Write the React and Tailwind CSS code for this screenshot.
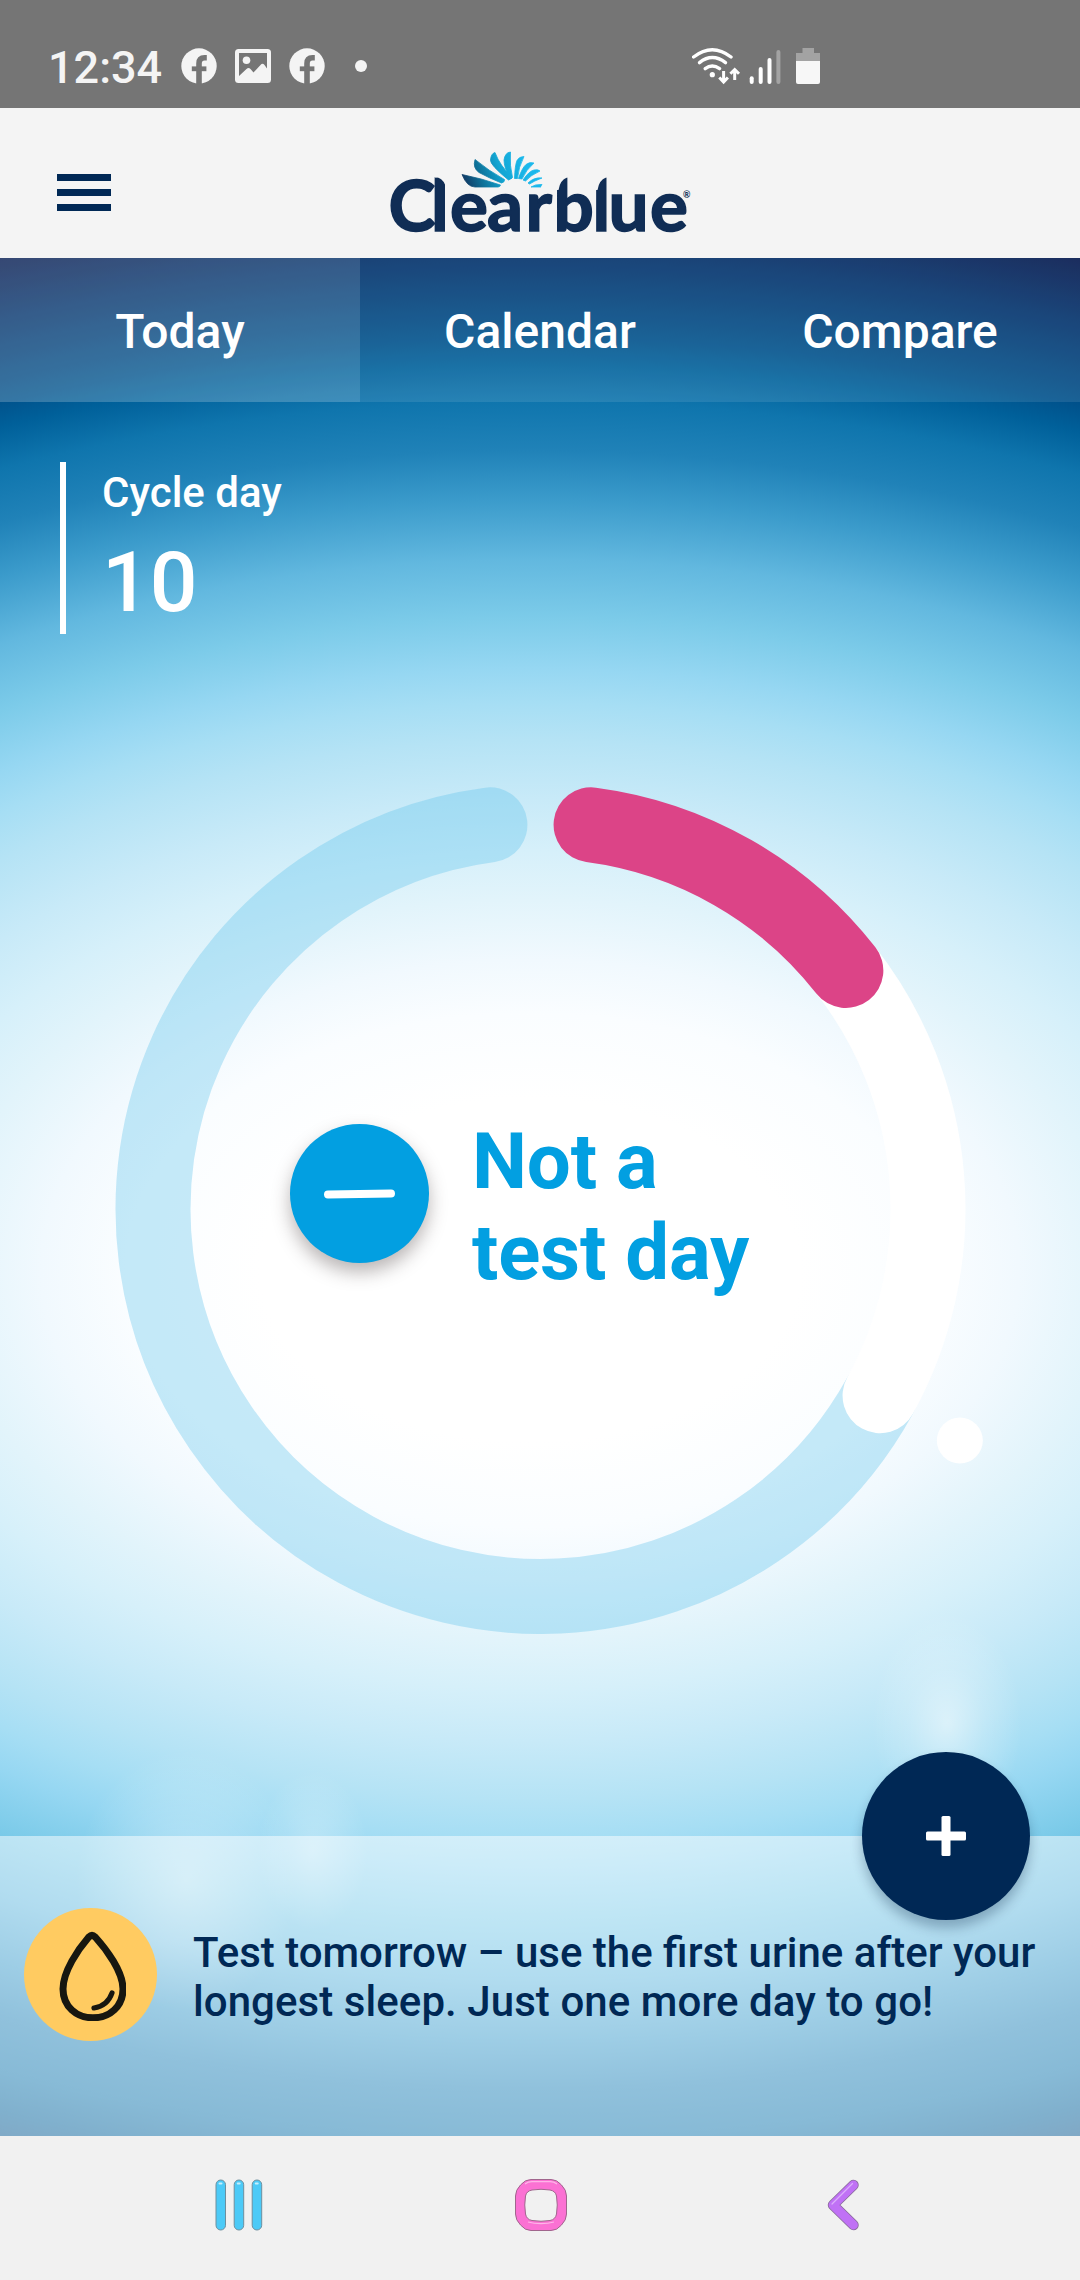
const TABS = [
  { id: 'today', label: 'Today' },
  { id: 'calendar', label: 'Calendar' },
  { id: 'compare', label: 'Compare' },
];

// ---------- RING GEOMETRY ----------
const RING = { cx: 540.5, cy: 1209, r: 387.5, width: 75 };

const polar = (deg, r = RING.r) => {
  const rad = ((deg - 90) * Math.PI) / 180;
  return [RING.cx + r * Math.cos(rad), RING.cy + r * Math.sin(rad)];
};

const arc = (from, to) => {
  const [x1, y1] = polar(from);
  const [x2, y2] = polar(to);
  const large = to - from > 180 ? 1 : 0;
  return `M${x1} ${y1}A${RING.r} ${RING.r} 0 ${large} 1 ${x2} ${y2}`;
};

function FacebookIcon() {
  return (
    <svg className="h-9 w-9" viewBox="0 0 36 36" fill="none">
      <circle cx="18" cy="18" r="17.7" fill="#f4f4f4" />
      <path d="M18 36V15.5Q18 9.8 23.5 9.8H25.8" stroke="#757575" strokeWidth="5.6" />
      <path d="M10.8 20.8H25.4" stroke="#757575" strokeWidth="4.8" />
    </svg>
  );
}

function PictureIcon() {
  return (
    <svg className="h-[34px] w-9" viewBox="0 0 36 34">
      <rect width="36" height="34" rx="3.5" fill="#f4f4f4" />
      <path d="M4 4H32V19.5L29.5 16Q27.5 13.5 25.5 16L18.5 23.5L15.5 20Q13.5 18 11.5 20L4 27Z" fill="#757575" />
      <circle cx="11.5" cy="11.3" r="3.8" fill="#f4f4f4" />
    </svg>
  );
}

function StatusBar() {
  return (
    <div className="flex h-[108px] items-start bg-[#757575] pl-12 text-[#f4f4f4]">
      <span className="mt-[42px] w-[133px] text-[45px] leading-[52px] font-medium">12:34</span>
      <div className="mt-12 flex items-center gap-[18px]">
        <FacebookIcon />
        <PictureIcon />
        <FacebookIcon />
      </div>
      <span className="mt-[60px] ml-[30px] h-3 w-3 rounded-full bg-[#f4f4f4]" />

      {/* wifi, signal, battery */}
      <svg className="mt-[46px] ml-[325px] h-10 w-[130px]" viewBox="692 46 130 40" fill="none" stroke="#fff" strokeLinecap="round">
        <g strokeWidth="3.4">
          <path d="M693.6 57Q712.2 42.5 731 57" />
          <path d="M699.5 62.6Q712.2 52.5 725.5 62.6" />
          <path d="M705.2 68.6Q712.2 63.3 719.6 68.6" />
        </g>
        <circle cx="712.3" cy="74.7" r="2.6" fill="#fff" stroke="none" />
        <g strokeWidth="3" strokeLinecap="butt">
          <path d="M723.6 71V82M719.3 77.5L723.6 82L727.9 77.5" />
          <path d="M734.7 80V69.5M730.4 73.8L734.7 69.5L739 73.8" />
        </g>
        <g strokeWidth="4">
          <path d="M751.7 78.2V82" />
          <path d="M760.7 69V82" />
          <path d="M769.5 60V82" />
          <path d="M778.4 52V82" stroke="#a3a3a3" />
        </g>
        <path d="M802.5 48H814V53H820V61H796V53H802.5Z" fill="#a3a3a3" stroke="none" />
        <path d="M796 61H820V82Q820 84 818 84H798Q796 84 796 82Z" fill="#f7f7f7" stroke="none" />
      </svg>
    </div>
  );
}

function Logo() {
  return (
    <svg className="h-[106px] w-[310px]" viewBox="385 148 310 106">
      <defs>
        <linearGradient id="rays" gradientUnits="userSpaceOnUse" x1="462" y1="186" x2="525" y2="164">
          <stop offset="0" stopColor="#12305b" />
          <stop offset="0.3" stopColor="#0d6f96" />
          <stop offset="0.62" stopColor="#12a5d2" />
          <stop offset="1" stopColor="#1ab8ec" />
        </linearGradient>
      </defs>
      <g fill="url(#rays)" stroke="url(#rays)" strokeWidth="0.8">
        <path d="M462 174.500Q482 178.500 500.500 185Q500 187 498 187H475Q467 187 462 174.500Z" />
        <path d="M475 159.500Q489 171 504.500 179.500Q505 182 501.500 183Q489 178 479 172.500Q472.500 168 475 159.500Z" />
        <path d="M495 152.500Q500 166 512 177Q511 179.500 508.500 180Q490 165 490.500 160Q491 153.500 495 152.500Z" />
        <path d="M510.500 152Q509.500 166 512.500 177.500Q511 180 509.500 178Q504 167 504 160Q505 152.500 510.500 152Z" />
        <path d="M524 156.500Q518.500 167 517.500 178.500H514.500Q515 165 517 160.500Q519 156.500 524 156.500Z" />
        <path d="M534 163Q526 170 522 179L518.500 178.500Q522 168 526 164.500Q529.500 161.500 534 163Z" />
        <path d="M540 171Q531 175 525.500 181L523 180Q529 171 534 170Q538 169 540 171Z" />
        <path d="M542 178Q534 181 529.500 184L528 183Q534 177 542 178Z" />
        <path d="M542 184.500Q540 187 541 187H531Q535 184 542 184.500Z" />
      </g>
      <text
        y="230.6"
        x="388.5 431 450 487 525.5 553.5 592.5 608.5 650"
        className="font-[Lato,sans-serif] text-[71px] font-bold"
        fill="#102d55"
        stroke="#102d55"
        strokeWidth="1.6"
      >
        Clearblue
      </text>
      {/* rounded cut on the ascenders */}
      <g fill="#f4f4f4">
        <path d="M435 174V177.500H438Q445 180 446.500 190H449V174Z" />
        <path d="M569.500 174V177.500H567Q560 180 558.500 190H556V174Z" />
        <path d="M608 174V177.500H606Q599 180 597.500 190H595V174Z" />
      </g>
      <text x="683" y="197.5" className="font-[Lato,sans-serif] text-[9px] font-bold" fill="#102d55">®</text>
    </svg>
  );
}

function CycleRing() {
  const [dotX, dotY] = polar(118.9, 479);

  return (
    <div className="mt-[150px] grid h-[850px]">
      <svg className="col-start-1 row-start-1 h-[850px] w-[1080px]" viewBox="0 784 1080 850" fill="none" strokeWidth={RING.width}>
        <path d={arc(118.8, 352.5)} stroke="#5bc2ea" strokeOpacity="0.34" strokeLinecap="round" />
        <path d={arc(52, 118.8)} stroke="#fff" strokeLinecap="round" />
        <path d={arc(7.5, 52)} stroke="#dc4487" strokeLinecap="round" />
        <circle cx={dotX} cy={dotY} r="23" fill="#fff" />
      </svg>

      <div className="col-start-1 row-start-1 flex items-start pt-[332px] pl-[289.5px]">
        <div className="mt-2 flex h-[139px] w-[139px] items-center justify-center rounded-full bg-[#029fe1] shadow-[0_9px_18px_rgba(60,50,50,0.36)]">
          <span className="h-[7.5px] w-[71px] -rotate-1 rounded-full bg-white" />
        </div>
        <p className="ml-[43.5px] text-[78px] leading-[91px] font-bold tracking-[-0.2px] text-[#029fe1]">
          Not a
          <br />
          test day
        </p>
      </div>
    </div>
  );
}

function TipPanel() {
  return (
    <div className="relative flex h-[300px] items-start bg-white/50 pl-6">
      <div className="mt-[72px] flex h-[133px] w-[133px] items-center justify-center rounded-full bg-[#ffcb61]">
        <svg className="h-[92px] w-[70px]" viewBox="55.5 1928.5 70 92" fill="none" stroke="#171710" strokeLinecap="round">
          <path d="M88.3 1936.5Q91.5 1933.5 94.7 1936.5C106 1949 122.5 1971 122.5 1988.5C122.5 2006 109 2017.3 92.5 2017.3C76 2017.3 62.5 2006 62.5 1988.5C62.5 1971 77.5 1949 88.3 1936.5Z" strokeWidth="7" />
          <path d="M111.5 1992.5Q107 2005.5 93.5 2007.5" strokeWidth="5.2" />
        </svg>
      </div>
      <p className="mt-[92px] ml-9 text-[42px] leading-[49px] font-medium whitespace-nowrap text-[#002855]">
        Test tomorrow – use the first urine after your
        <br />
        <span className="tracking-[0.07px]">longest sleep. Just one more day to go!</span>
      </p>

      {/* floating add button sits on the panel edge */}
      <button className="absolute -top-[84px] right-[50px] flex h-[168px] w-[168px] items-center justify-center rounded-full bg-[#002855] shadow-[0_8px_12px_rgba(0,30,60,0.28)]">
        <svg className="h-10 w-10" viewBox="0 0 40 40" fill="#fff">
          <rect x="15.5" y="0" width="9" height="40" rx="1.5" />
          <rect x="0" y="15.5" width="40" height="9" rx="1.5" />
        </svg>
      </button>
    </div>
  );
}

function NavBar() {
  return (
    <div className="flex h-36 items-start bg-[#f1f1f1] pt-[42px] pl-[215px]">
      <svg className="h-[54px] w-12" viewBox="0 0 48 54" fill="#4ccaf7" stroke="#6d8f9e" strokeWidth="1">
        <rect x="1" y="2" width="9.5" height="50" rx="4.7" />
        <rect x="19.2" y="2" width="9.5" height="50" rx="4.7" />
        <rect x="37.2" y="2" width="9.5" height="50" rx="4.7" />
        <path d="M4.5 5.5h2M22.7 5.5h2M40.7 5.5h2" stroke="#c5effd" strokeWidth="2" strokeLinecap="round" />
      </svg>
      <svg className="ml-[251px] h-[54px] w-[54px]" viewBox="0 0 54 54">
        <path
          d="M17 1.5H37Q43 1.5 47.500 7Q52.5 12 52.5 18V36Q52.5 42 47.5 47Q43 52.5 37 52.5H17Q11 52.5 6.5 47Q1.5 42 1.5 36V18Q1.5 12 6.5 7Q11 1.5 17 1.5ZM18 12Q12.5 13 11.5 18Q10 27 11.5 36Q12.5 41.5 18 42.5Q27 44 36 42.5Q41.5 41.5 42.5 36Q44 27 42.5 18Q41.5 13 36 12Q27 10.5 18 12Z"
          fill="#fb71d3"
          fillRule="evenodd"
          stroke="#a0668d"
          strokeWidth="1"
        />
        <path d="M11 6Q14 3.7 18 3.7H36Q40 3.7 43 6M14 44Q20 45.7 27 45.7T40 44" fill="none" stroke="#fdb6e8" strokeWidth="1.2" />
      </svg>
      <svg className="ml-[258px] h-[54px] w-[34px]" viewBox="0 0 34 54" fill="none" strokeLinecap="round" strokeLinejoin="round">
        <path d="M27.5 7L7 27L27.5 47" stroke="#8a6d9c" strokeWidth="10.5" />
        <path d="M27.5 7L7 27L27.5 47" stroke="#c071f5" strokeWidth="8.8" />
        <path d="M26.5 5.500L6 26" stroke="#dbaefb" strokeWidth="1.2" />
      </svg>
    </div>
  );
}

export default function App() {
  return (
    <div className="w-[1080px] overflow-hidden font-[Roboto,sans-serif]">
      <StatusBar />

      <header className="flex h-[150px] items-start bg-[#f4f4f4]">
        <button className="mt-[66px] ml-[57px] flex w-[54px] flex-col gap-[8.5px]">
          <span className="h-[6.5px] w-full bg-[#002855]" />
          <span className="h-[6.5px] w-full bg-[#002855]" />
          <span className="h-[6.5px] w-full bg-[#002855]" />
        </button>
        <div className="mt-10 ml-[274px]">
          <Logo />
        </div>
      </header>

      <main className="bg-[radial-gradient(75px_110px_at_947px_1465px,rgba(255,255,255,0.5),rgba(255,255,255,0.2)_50%,transparent),radial-gradient(55px_80px_at_313px_1592px,rgba(255,255,255,0.3),transparent),radial-gradient(110px_130px_at_186px_1622px,rgba(255,255,255,0.36),transparent),radial-gradient(1685px_1070px_at_530px_1012px,#fff_16%,#fafdff_24%,#f1f9fe_29%,#e2f4fb_34.6%,#d6f0fa_39.2%,#c8eaf8_44%,#b5e3f5_49.5%,#a6def4_53%,#96d7f2_56.2%,#7ccbe9_61%,#62b8df_66.4%,#3b9bcb_72%,#2082b8_76.6%,#0f75ad_81.2%,#00609a_84.8%,#00508a_87.4%,#012f69_94.8%,#02164c_100%)]">
        <nav className="flex h-36 bg-white/10">
          {TABS.map((tab, i) => (
            <button
              key={tab.id}
              className={`flex-1 pt-[3px] text-[48px] leading-[56px] font-medium text-white ${i === 0 ? 'bg-white/12' : ''}`}
            >
              {tab.label}
            </button>
          ))}
        </nav>

        <div className="h-[1434px] pt-[60px]">
          <div className="ml-[60px] h-[172px] border-l-[6px] border-white pt-1.5 pl-9 font-medium text-white">
            <p className="text-[42px] leading-[49px]">Cycle day</p>
            <p className="mt-[17px] text-[84px] leading-[98px]">10</p>
          </div>
          <CycleRing />
        </div>

        <TipPanel />
      </main>

      <NavBar />
    </div>
  );
}
